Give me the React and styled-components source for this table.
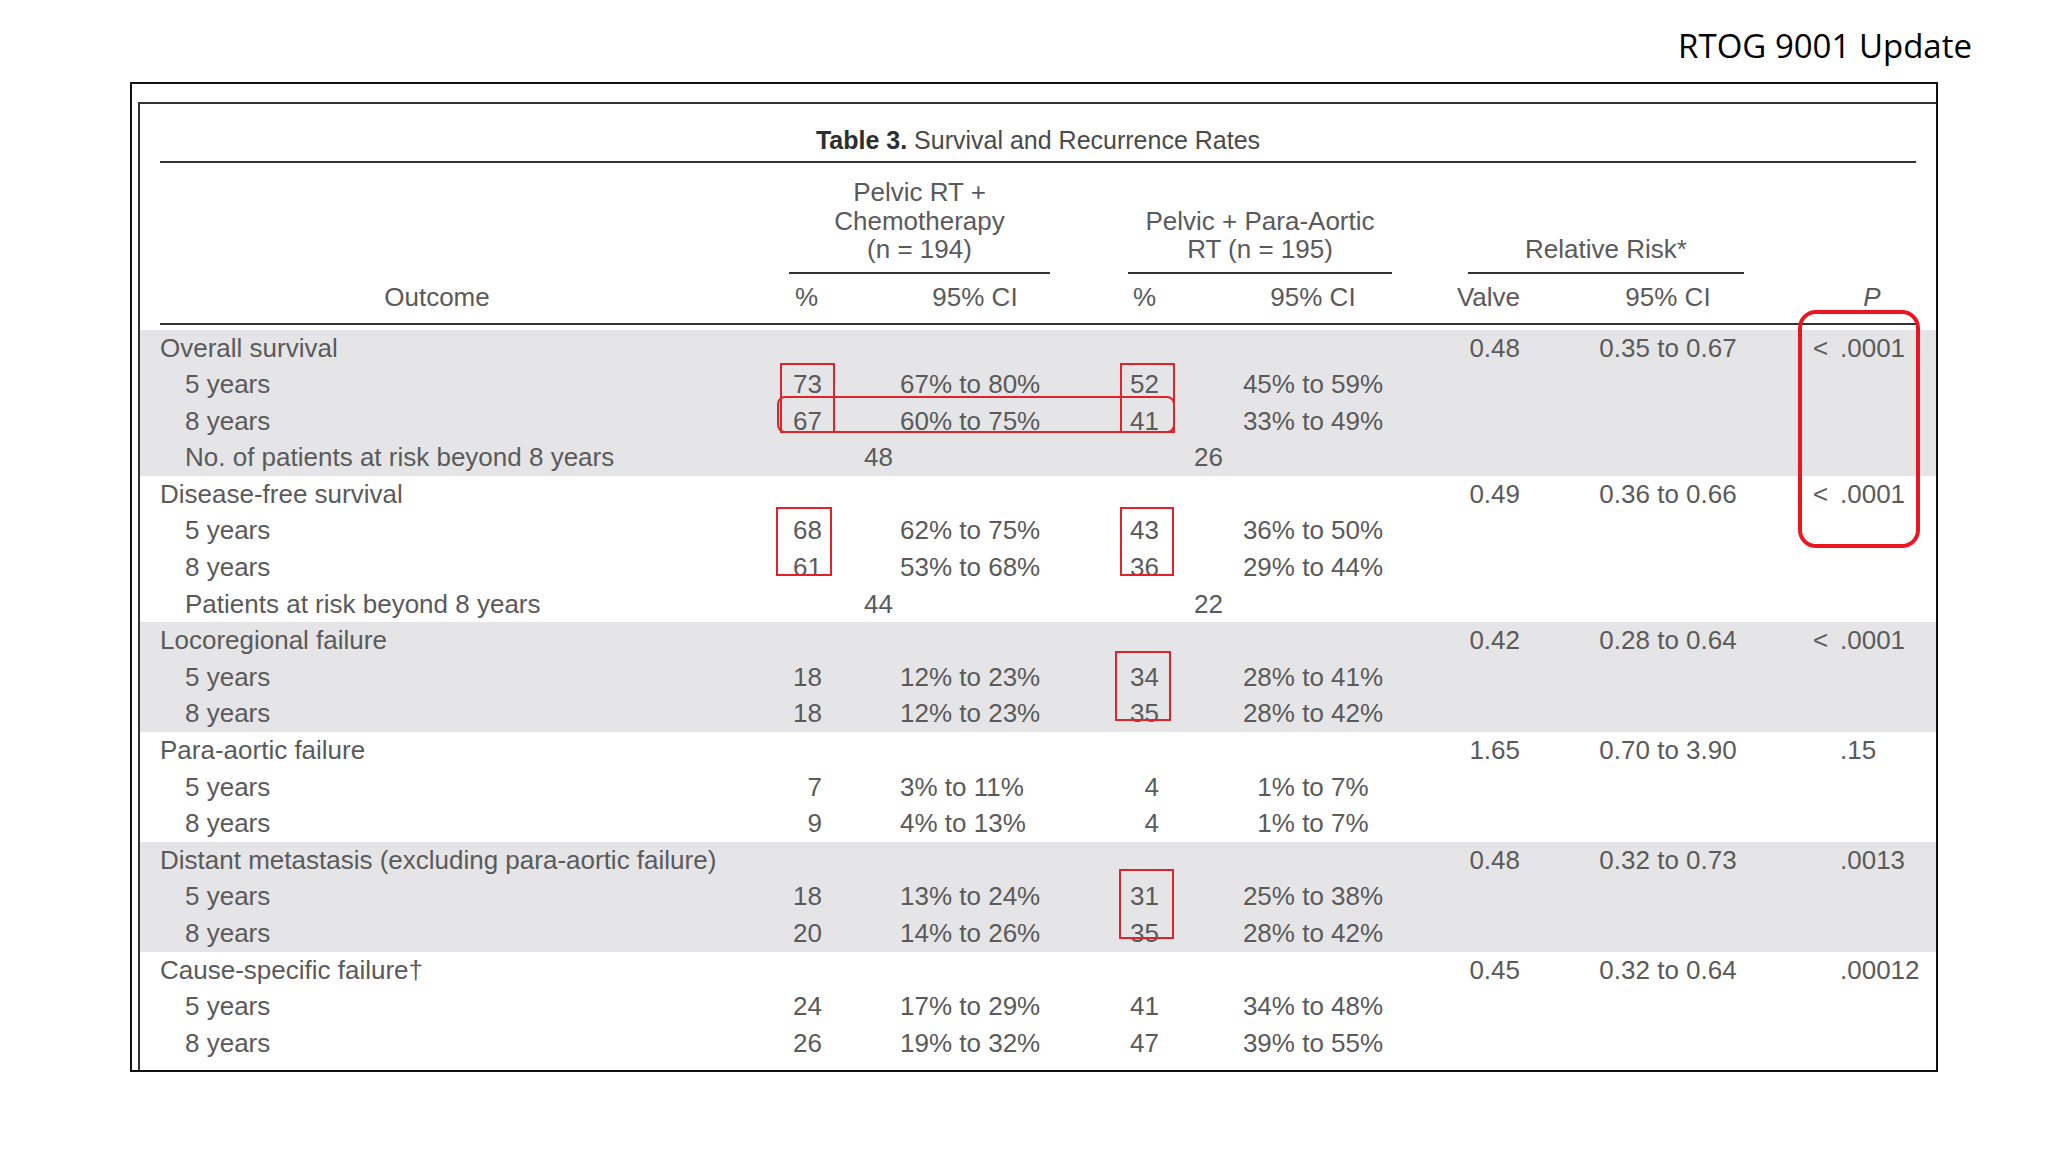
import React from "react";
import styled, { createGlobalStyle } from "styled-components";

const GlobalStyle = createGlobalStyle`
  html, body { margin: 0; padding: 0; background: #fff; }
  body { width: 2048px; height: 1152px; overflow: hidden; }
`;

const COLS = "610px 52px 78px 150px 109px 64px 180px 117px 296px 100px";

const Page = styled.div`
  width: 2048px;
  height: 1152px;
  background: #fff;
`;

const SlideHeader = styled.header`
  height: 82px;
  box-sizing: border-box;
  padding: 23px 76px 0 0;
  display: flex;
  justify-content: flex-end;
  font-family: "Open Sans", "Noto Sans", sans-serif;
  font-size: 33px;
  line-height: normal;
  color: #000;
`;

const Frame = styled.div`
  position: relative;
  margin-left: 130px;
  width: 1808px;
  height: 990px;
  box-sizing: border-box;
  border: 2px solid #111;
  padding: 18px 0 0 6px;
`;

const Sheet = styled.div`
  height: 100%;
  box-sizing: border-box;
  border-top: 2px solid #333;
  border-left: 2px solid #333;
  font-family: "Liberation Sans", Arial, sans-serif;
  font-size: 26px;
  color: #5a5a5a;
`;

const Caption = styled.div`
  margin: 0 20px;
  padding: 21px 0 6px;
  line-height: 30px;
  font-size: 25px;
  text-align: center;
  border-bottom: 2px solid #333;
  color: #4a4a4a;
  b { color: #2e2e2e; font-weight: bold; }
`;

const Head = styled.div`
  margin: 0 20px;
  padding-top: 15px;
  display: grid;
  grid-template-columns: ${COLS};
  grid-template-rows: auto 49px;
  border-bottom: 2px solid #333;
`;

const Group = styled.div`
  grid-row: 1;
  grid-column: ${(p) => p.$cols};
  align-self: end;
  margin: 0 ${(p) => p.$mr || 0}px 0 ${(p) => p.$ml || 0}px;
  padding-bottom: 8px;
  border-bottom: 2px solid #333;
  text-align: center;
  line-height: 28.5px;
`;

const ColLabel = styled.div`
  grid-row: 2;
  grid-column: ${(p) => p.$col};
  line-height: 47px;
  white-space: nowrap;
  text-align: ${(p) => p.$align || "center"};
  padding: 0 ${(p) => p.$pr || 0}px 0 ${(p) => p.$pl || 0}px;
  font-style: ${(p) => (p.$italic ? "italic" : "normal")};
`;

const Body = styled.div`
  padding-top: 5px;
`;

const Band = styled.div`
  background: ${(p) => (p.$shade ? "#e5e5e7" : "transparent")};
`;

const Row = styled.div`
  display: grid;
  grid-template-columns: ${COLS};
  padding: 0 20px;
  height: 36.6px;
  line-height: 36.6px;
  white-space: nowrap;
`;

const Cell = styled.div`
  grid-column: ${(p) => p.$col};
  text-align: ${(p) => p.$align || "left"};
  padding: 0 ${(p) => p.$pr || 0}px 0 ${(p) => p.$pl || 0}px;
`;

const Lt = styled.span`
  display: inline-block;
  width: 27px;
  margin-left: -27px;
`;

const Mark = styled.div`
  position: absolute;
  box-sizing: border-box;
  left: ${(p) => p.$x}px;
  top: ${(p) => p.$y}px;
  width: ${(p) => p.$w}px;
  height: ${(p) => p.$h}px;
  border: ${(p) => p.$bw || 2}px solid ${(p) => p.$color || "#e0222a"};
  border-radius: ${(p) => p.$r || 0}px;
  pointer-events: none;
`;

const groups = [
  {
    title: "Overall survival",
    rr: "0.48",
    rrci: "0.35 to 0.67",
    p: "< .0001",
    rows: [
      ["5 years", "73", "67% to 80%", "52", "45% to 59%"],
      ["8 years", "67", "60% to 75%", "41", "33% to 49%"],
    ],
    risk: ["No. of patients at risk beyond 8 years", "48", "26"],
  },
  {
    title: "Disease-free survival",
    rr: "0.49",
    rrci: "0.36 to 0.66",
    p: "< .0001",
    rows: [
      ["5 years", "68", "62% to 75%", "43", "36% to 50%"],
      ["8 years", "61", "53% to 68%", "36", "29% to 44%"],
    ],
    risk: ["Patients at risk beyond 8 years", "44", "22"],
  },
  {
    title: "Locoregional failure",
    rr: "0.42",
    rrci: "0.28 to 0.64",
    p: "< .0001",
    rows: [
      ["5 years", "18", "12% to 23%", "34", "28% to 41%"],
      ["8 years", "18", "12% to 23%", "35", "28% to 42%"],
    ],
  },
  {
    title: "Para-aortic failure",
    rr: "1.65",
    rrci: "0.70 to 3.90",
    p: ".15",
    rows: [
      ["5 years", "7", "3% to 11%", "4", "1% to 7%"],
      ["8 years", "9", "4% to 13%", "4", "1% to 7%"],
    ],
  },
  {
    title: "Distant metastasis (excluding para-aortic failure)",
    rr: "0.48",
    rrci: "0.32 to 0.73",
    p: ".0013",
    rows: [
      ["5 years", "18", "13% to 24%", "31", "25% to 38%"],
      ["8 years", "20", "14% to 26%", "35", "28% to 42%"],
    ],
  },
  {
    title: "Cause-specific failure\u2020",
    rr: "0.45",
    rrci: "0.32 to 0.64",
    p: ".00012",
    rows: [
      ["5 years", "24", "17% to 29%", "41", "34% to 48%"],
      ["8 years", "26", "19% to 32%", "47", "39% to 55%"],
    ],
  },
];

const marks = [
  { x: 648, y: 279, w: 55, h: 70 },
  { x: 645, y: 312, w: 398, h: 37, r: 8 },
  { x: 988, y: 279, w: 55, h: 70 },
  { x: 644, y: 423, w: 56, h: 69 },
  { x: 988, y: 423, w: 54, h: 69 },
  { x: 983, y: 567, w: 56, h: 70 },
  { x: 987, y: 785, w: 55, h: 70 },
  { x: 1666, y: 226, w: 122, h: 238, bw: 4, r: 18, color: "#ec1620" },
];

function PValue({ value }) {
  const hasLt = value.startsWith("<");
  return (
    <Cell $col={10} $pl={24}>
      {hasLt && <Lt>&lt;</Lt>}
      {hasLt ? value.slice(1).trim() : value}
    </Cell>
  );
}

function GroupBand({ g, shade }) {
  return (
    <Band $shade={shade}>
      <Row>
        <Cell $col={1}>{g.title}</Cell>
        <Cell $col={8} $align="right">{g.rr}</Cell>
        <Cell $col={9} $align="center">{g.rrci}</Cell>
        <PValue value={g.p} />
      </Row>
      {g.rows.map((r) => (
        <Row key={r[0]}>
          <Cell $col={1} $pl={25}>{r[0]}</Cell>
          <Cell $col={2} $align="right">{r[1]}</Cell>
          <Cell $col={4}>{r[2]}</Cell>
          <Cell $col={5} $align="right">{r[3]}</Cell>
          <Cell $col={7} $align="center">{r[4]}</Cell>
        </Row>
      ))}
      {g.risk && (
        <Row>
          <Cell $col={1} $pl={25}>{g.risk[0]}</Cell>
          <Cell $col={3} $align="right" $pr={7}>{g.risk[1]}</Cell>
          <Cell $col={6} $align="right">{g.risk[2]}</Cell>
        </Row>
      )}
    </Band>
  );
}

export default function App() {
  return (
    <Page>
      <GlobalStyle />
      <SlideHeader>RTOG 9001 Update</SlideHeader>
      <Frame>
        <Sheet>
          <Caption>
            <b>Table 3.</b> Survival and Recurrence Rates
          </Caption>
          <Head>
            <Group $cols="2 / 5" $ml={19}>
              Pelvic RT +
              <br />
              Chemotherapy
              <br />
              (n = 194)
            </Group>
            <Group $cols="5 / 8" $ml={78} $mr={11}>
              Pelvic + Para-Aortic
              <br />
              RT (n = 195)
            </Group>
            <Group $cols="8 / 10" $ml={65} $mr={72}>
              Relative Risk*
            </Group>
            <ColLabel $col={1} $pr={56}>Outcome</ColLabel>
            <ColLabel $col={2} $align="right" $pr={4}>%</ColLabel>
            <ColLabel $col={4}>95% CI</ColLabel>
            <ColLabel $col={5} $align="right" $pr={3}>%</ColLabel>
            <ColLabel $col={7}>95% CI</ColLabel>
            <ColLabel $col={8} $align="right">Valve</ColLabel>
            <ColLabel $col={9}>95% CI</ColLabel>
            <ColLabel $col={10} $pl={12} $italic>P</ColLabel>
          </Head>
          <Body>
            {groups.map((g, i) => (
              <GroupBand key={g.title} g={g} shade={i % 2 === 0} />
            ))}
          </Body>
        </Sheet>
        {marks.map((m, i) => (
          <Mark key={i} $x={m.x} $y={m.y} $w={m.w} $h={m.h} $r={m.r} $bw={m.bw} $color={m.color} />
        ))}
      </Frame>
    </Page>
  );
}
